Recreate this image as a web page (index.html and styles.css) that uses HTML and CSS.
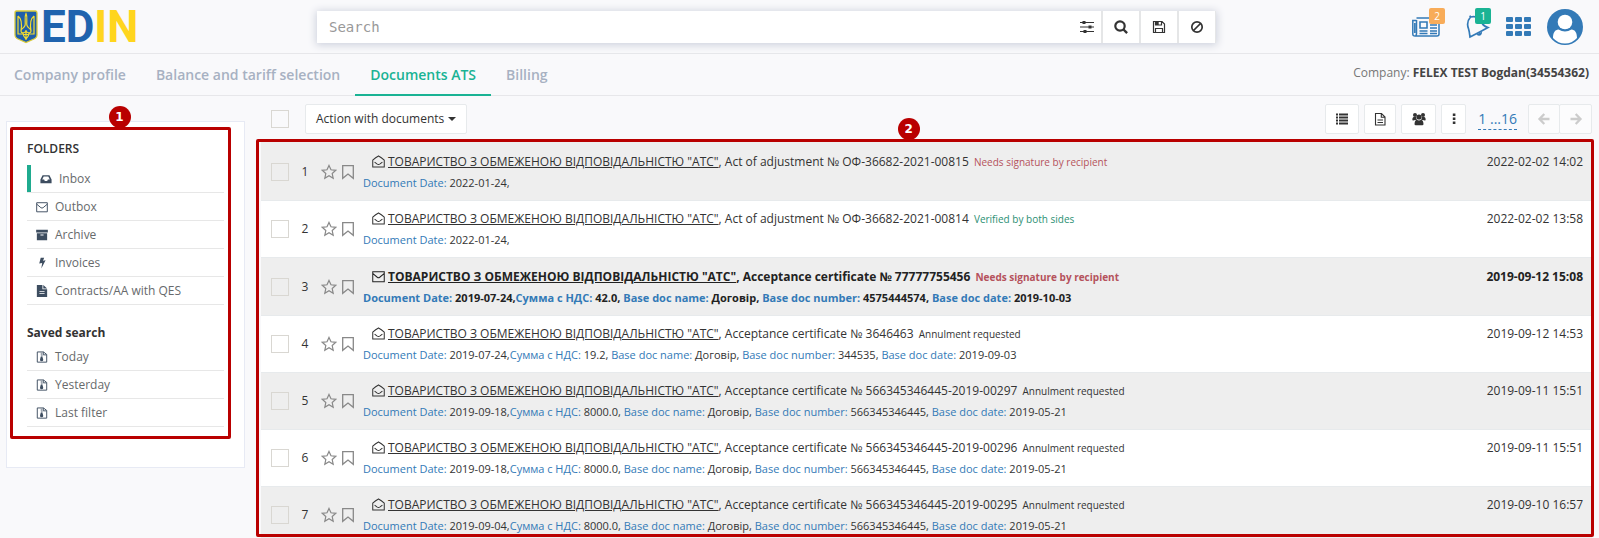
FILE: index.html
```html
<!DOCTYPE html>
<html lang="en">
<head>
<meta charset="utf-8">
<meta name="viewport" content="width=device-width, initial-scale=1">
<title>EDIN – Documents ATS</title>
<link rel="stylesheet" href="styles.css">
</head>
<body>
<svg class="sprite" aria-hidden="true">
  <symbol id="star" viewBox="0 0 16 16"><path d="M8 1.400l2 4.400 4.800.5-3.600 3.200 1 4.800L8 11.800l-4.200 2.500 1-4.800L1.200 6.300 6 5.800z" fill="none" stroke="currentColor" stroke-width="1.200"/></symbol>
  <symbol id="bookmark" viewBox="0 0 14 16"><path d="M1.700 1.700h10.600v12.600L7 10l-5.300 4.300z" fill="none" stroke="currentColor" stroke-width="1.300"/></symbol>
  <symbol id="open" viewBox="0 0 14 14"><path d="M.8 13V5.500Q4 2.500 7 1q3 1.500 6.200 4.500V13zM2.800 7.600L5.700 9.800q1.300.8 2.600 0l2.900-2.200" fill="none" stroke="currentColor" stroke-width="1.100"/></symbol>
  <symbol id="mail" viewBox="0 0 14 14"><path d="M.8 2h12.400v10.600H.8zM1 3.800l4.700 4q1.300.9 2.600 0l4.700-4" fill="none" stroke="currentColor" stroke-width="1.100"/></symbol>
  <symbol id="filter" viewBox="0 0 14 14"><path d="M1.500 1.100h7.200L12.500 4v9h-11zM8.500 1.100V4.500h3.700" fill="none" stroke="currentColor" stroke-width="1.100"/><path d="M5.500 2h1v1h-1zM6.500 3h1v1h-1zM5.500 4h1v1h-1zM6.500 5h1v1h-1zM5.600 6.500h1.800l1 3.500a1.900 1.700 0 1 1-3.700 0z" fill="currentColor"/></symbol>
</svg>

<header class="top">
  <a class="logo" href="#" aria-label="EDIN">
    <svg class="emblem" viewBox="0 0 24 34" aria-hidden="true">
      <path d="M2.500 1h19q1.500 0 1.500 2v22q0 2.500-2 3.500L12 32.500 3 28.500Q1 27.500 1 25V3Q1 1 2.500 1z" fill="#1f5fa9" stroke="#d9cb3a" stroke-width="1.300"/>
      <path d="M4 6v18h5.500M4 6c4 3 4 9 3 15M20 6v18h-5.500M20 6c-4 3-4 9-3 15M12 3.500c-2 4 0 9-1 12-1 3-4 3-4 5.500 0 2 3 3 5 0 2 3 5 2 5 0 0-2.500-3-2.500-4-5.500-1-3 1-8-1-12zM12 20v10M9 23c0 3 1 4 3 6 2-2 3-3 3-6M9.500 24.500h5" fill="none" stroke="#f5dc2e" stroke-width="1.200"/>
    </svg>
    <span>ED</span><span class="logo-in">IN</span>
  </a>
  <form class="search" role="search">
    <input class="search-input" type="search" placeholder="Search" aria-label="Search">
    <button class="search-btn search-tune" type="button" aria-label="Search settings"><svg viewBox="0 0 14 14"><path d="M0 2.500h14M0 7h14M0 11.500h14" stroke="currentColor"/><path d="M2.500 1h3v3h-3zM8.500 5.500h3v3h-3zM3.500 10h3v3h-3z" fill="currentColor"/></svg></button>
    <button class="search-btn" type="submit" aria-label="Find"><svg viewBox="0 0 14 14"><circle cx="6" cy="6" r="4.700" fill="none" stroke="currentColor" stroke-width="2.200"/><path d="M9.500 9.500l3.600 3.600" stroke="currentColor" stroke-width="2.400"/></svg></button>
    <button class="search-btn" type="button" aria-label="Save search"><svg viewBox="0 0 14 14"><path d="M1.500 1.500h8.500l2.500 2.500v8.500h-11zM3.500 12V8.500h7V12M3.500 1.500V5h6V1.500" fill="none" stroke="currentColor" stroke-width="1.200"/><path d="M4 2h2.700v3H4z" fill="currentColor"/></svg></button>
    <button class="search-btn" type="button" aria-label="Clear search"><svg viewBox="0 0 14 14"><circle cx="7" cy="7" r="5.200" fill="none" stroke="currentColor" stroke-width="1.700"/><path d="M3.500 10.500l7-7" stroke="currentColor" stroke-width="1.700"/></svg></button>
  </form>
  <div class="tools">
    <a class="tool" href="#" aria-label="News"><svg class="ic-news" viewBox="0 0 28 20"><path d="M4.500 1h22.500v16q0 2-2 2H3q-2.200 0-2.200-2V3.500h3.700M4.500 3v14q0 1.500-1.200 1.500M2.800 6v10" fill="none" stroke="currentColor" stroke-width="1.500"/><path d="M8 5h7v6H8zM7.500 14h8M7.500 16.500h8M18 5h7M18 8h7M18 11h7M18 14h7M18 16.500h7" fill="none" stroke="currentColor" stroke-width="1.600"/></svg><span class="count count-news">2</span></a>
    <a class="tool" href="#" aria-label="Notifications"><svg class="ic-bell" viewBox="0 0 24 24"><path d="M4.500 2C1 6 1 10 2.600 14c.8 2.500 1 5 1.400 8C9 19.500 14 17 22 12.500c-3-.8-5-2.500-6-4.500C14 3.500 10 .5 4.500 2zM4.500 2L3.800.6" fill="none" stroke="currentColor" stroke-width="1.700"/><path d="M10.500 19.500l5.500-2.800c.6 3.500-3 5.300-5.500 2.800z" fill="currentColor"/></svg><span class="count count-bell">1</span></a>
    <a class="tool" href="#" aria-label="Applications"><svg class="ic-apps" viewBox="0 0 25 19"><g fill="currentColor"><rect width="7" height="5" rx="1"/><rect x="9" width="7" height="5" rx="1"/><rect x="18" width="7" height="5" rx="1"/><rect y="7" width="7" height="5" rx="1"/><rect x="9" y="7" width="7" height="5" rx="1"/><rect x="18" y="7" width="7" height="5" rx="1"/><rect y="14" width="7" height="5" rx="1"/><rect x="9" y="14" width="7" height="5" rx="1"/><rect x="18" y="14" width="7" height="5" rx="1"/></g></svg></a>
    <a class="tool" href="#" aria-label="Account"><svg class="ic-user" viewBox="0 0 36 36"><circle cx="18" cy="18" r="18" fill="currentColor"/><circle cx="18" cy="13" r="7.300" fill="#fff"/><path d="M6 29c0-5 2-8.500 5.500-8.500q6.500 4 13 0C28 20.500 30 24 30 29q-5 5.500-12 5.500T6 29z" fill="#fff"/></svg></a>
  </div>
</header>

<nav class="tabs">
  <a class="tab" href="#">Company profile</a>
  <a class="tab" href="#">Balance and tariff selection</a>
  <a class="tab tab-active" href="#">Documents ATS</a>
  <a class="tab" href="#">Billing</a>
  <p class="company">Company: <strong>FELEX TEST Bogdan(34554362)</strong></p>
</nav>

<main class="main">
  <aside class="side">
    <div class="frame frame-side"><span class="marker">1</span></div>
    <h2 class="side-title side-folders">FOLDERS</h2>
    <ul class="side-list">
      <li><a class="side-link side-link-active" href="#"><svg viewBox="0 0 14 14"><path d="M3 2.500h8l2.500 5v4.500H.5V7.500zM4.300 4L2.600 7.600h2.200l.8 1.600h2.800l.8-1.600h2.200L9.700 4z" fill="currentColor" fill-rule="evenodd"/></svg>Inbox</a></li>
      <li><a class="side-link" href="#"><svg viewBox="0 0 14 14"><use href="#mail"/></svg>Outbox</a></li>
      <li><a class="side-link" href="#"><svg viewBox="0 0 14 14"><path d="M.2 1h13.600v3.200H.2zM1 5h12v8H1zM5.200 6.300v1.200h3.600V6.300z" fill="currentColor" fill-rule="evenodd"/></svg>Archive</a></li>
      <li><a class="side-link" href="#"><svg viewBox="0 0 14 14"><path d="M5.500 1h4L8.200 4.500l3-.6L6.200 13.500 7.200 7l-3.400.7z" fill="currentColor"/></svg>Invoices</a></li>
      <li><a class="side-link" href="#"><svg viewBox="0 0 14 14"><path d="M1 0h6.500v5h5.500v9H1zM8.500 0l4.500 4.200H8.500zM4 7v1h6V7zM4 9.500v1h6v-1z" fill="currentColor" fill-rule="evenodd"/></svg>Contracts/AA with QES</a></li>
    </ul>
    <h2 class="side-title side-saved">Saved search</h2>
    <ul class="side-list">
      <li><a class="side-link" href="#"><svg viewBox="0 0 14 14"><use href="#filter"/></svg>Today</a></li>
      <li><a class="side-link" href="#"><svg viewBox="0 0 14 14"><use href="#filter"/></svg>Yesterday</a></li>
      <li><a class="side-link" href="#"><svg viewBox="0 0 14 14"><use href="#filter"/></svg>Last filter</a></li>
    </ul>
  </aside>

  <section class="content">
    <div class="bar">
      <input class="check" type="checkbox" aria-label="Select all documents">
      <button class="btn btn-action" type="button">Action with documents<span class="caret"></span></button>
      <div class="bar-right">
        <button class="btn btn-34" type="button" aria-label="List view"><svg viewBox="0 0 14 14"><path d="M1 2.500h2M1 5.500h2M1 8.500h2M1 11.500h2M4 2.500h9M4 5.500h9M4 8.500h9M4 11.500h9" stroke="currentColor" stroke-width="1.900"/></svg></button>
        <button class="btn btn-32" type="button" aria-label="Report"><svg viewBox="0 0 14 14"><path d="M2.500 1.500h6l3.500 3.500v8H2.500zM8.300 1.500V5.200H12M4.500 8h5.500M4.500 10.500h5.500" fill="none" stroke="currentColor" stroke-width="1.100"/></svg></button>
        <button class="btn btn-36" type="button" aria-label="Partners"><svg viewBox="0 0 14 14"><g fill="currentColor"><circle cx="3" cy="3" r="2"/><circle cx="11" cy="3" r="2"/><circle cx="7" cy="5" r="2.600"/><path d="M.3 8.200Q.2 5.200 1.500 5h2.600q0 2 1 3H2.500l-.4.600zM13.700 8.200q.1-3-1.200-3.200H9.900q0 2-1 3h2.600l.4.600zM2.500 12.500q0-4 2.300-4.700 2.200 1.500 4.400 0 2.300.7 2.300 4.700l-.9.800H3.400z"/></g></svg></button>
        <button class="btn btn-26" type="button" aria-label="More"><svg viewBox="0 0 14 14"><path d="M5.800 1.500h2.600v2.600H5.800zM5.800 5.500h2.600v2.600H5.800zM5.800 9.500h2.600v2.600H5.800z" fill="currentColor"/></svg></button>
        <a class="pages" href="#">1 ...16</a>
        <div class="pager">
          <button class="btn" type="button" disabled aria-label="Previous page"><svg viewBox="0 0 14 14"><path d="M12.500 7H3M7.300 2L2.500 7l4.800 5" fill="none" stroke="currentColor" stroke-width="2.300"/></svg></button>
          <button class="btn" type="button" disabled aria-label="Next page"><svg viewBox="0 0 14 14"><path d="M1.500 7H11M6.700 2l4.800 5-4.800 5" fill="none" stroke="currentColor" stroke-width="2.300"/></svg></button>
        </div>
      </div>
    </div>

    <div class="list-wrap">
      <div class="frame frame-list"><span class="marker">2</span></div>
      <ol class="list">
        <li class="doc">
          <input class="check" type="checkbox" aria-label="Select document 1"><span class="num">1</span><svg class="star"><use href="#star"/></svg><svg class="mark"><use href="#bookmark"/></svg>
          <div class="info"><p class="title"><svg class="env"><use href="#open"/></svg><a href="#">ТОВАРИСТВО З ОБМЕЖЕНОЮ ВІДПОВІДАЛЬНІСТЮ "АТС"</a>, Act of adjustment № ОФ-36682-2021-00815 <span class="state need">Needs signature by recipient</span></p>
          <p class="meta"><b>Document Date:</b> 2022-01-24,</p></div>
          <time class="when">2022-02-02 14:02</time>
        </li>
        <li class="doc">
          <input class="check" type="checkbox" aria-label="Select document 2"><span class="num">2</span><svg class="star"><use href="#star"/></svg><svg class="mark"><use href="#bookmark"/></svg>
          <div class="info"><p class="title"><svg class="env"><use href="#open"/></svg><a href="#">ТОВАРИСТВО З ОБМЕЖЕНОЮ ВІДПОВІДАЛЬНІСТЮ "АТС"</a>, Act of adjustment № ОФ-36682-2021-00814 <span class="state done">Verified by both sides</span></p>
          <p class="meta"><b>Document Date:</b> 2022-01-24,</p></div>
          <time class="when">2022-02-02 13:58</time>
        </li>
        <li class="doc unread">
          <input class="check" type="checkbox" aria-label="Select document 3"><span class="num">3</span><svg class="star"><use href="#star"/></svg><svg class="mark"><use href="#bookmark"/></svg>
          <div class="info"><p class="title"><svg class="env"><use href="#mail"/></svg><a href="#">ТОВАРИСТВО З ОБМЕЖЕНОЮ ВІДПОВІДАЛЬНІСТЮ "АТС"</a>, Acceptance certificate № 77777755456 <span class="state need">Needs signature by recipient</span></p>
          <p class="meta"><b>Document Date:</b> 2019-07-24,<b>Сумма с НДС:</b> 42.0, <b>Base doc name:</b> Договір, <b>Base doc number:</b> 4575444574, <b>Base doc date:</b> 2019-10-03</p></div>
          <time class="when">2019-09-12 15:08</time>
        </li>
        <li class="doc">
          <input class="check" type="checkbox" aria-label="Select document 4"><span class="num">4</span><svg class="star"><use href="#star"/></svg><svg class="mark"><use href="#bookmark"/></svg>
          <div class="info"><p class="title"><svg class="env"><use href="#open"/></svg><a href="#">ТОВАРИСТВО З ОБМЕЖЕНОЮ ВІДПОВІДАЛЬНІСТЮ "АТС"</a>, Acceptance certificate № 3646463 <span class="state">Annulment requested</span></p>
          <p class="meta"><b>Document Date:</b> 2019-07-24,<b>Сумма с НДС:</b> 19.2, <b>Base doc name:</b> Договір, <b>Base doc number:</b> 344535, <b>Base doc date:</b> 2019-09-03</p></div>
          <time class="when">2019-09-12 14:53</time>
        </li>
        <li class="doc">
          <input class="check" type="checkbox" aria-label="Select document 5"><span class="num">5</span><svg class="star"><use href="#star"/></svg><svg class="mark"><use href="#bookmark"/></svg>
          <div class="info"><p class="title"><svg class="env"><use href="#open"/></svg><a href="#">ТОВАРИСТВО З ОБМЕЖЕНОЮ ВІДПОВІДАЛЬНІСТЮ "АТС"</a>, Acceptance certificate № 566345346445-2019-00297 <span class="state">Annulment requested</span></p>
          <p class="meta"><b>Document Date:</b> 2019-09-18,<b>Сумма с НДС:</b> 8000.0, <b>Base doc name:</b> Договір, <b>Base doc number:</b> 566345346445, <b>Base doc date:</b> 2019-05-21</p></div>
          <time class="when">2019-09-11 15:51</time>
        </li>
        <li class="doc">
          <input class="check" type="checkbox" aria-label="Select document 6"><span class="num">6</span><svg class="star"><use href="#star"/></svg><svg class="mark"><use href="#bookmark"/></svg>
          <div class="info"><p class="title"><svg class="env"><use href="#open"/></svg><a href="#">ТОВАРИСТВО З ОБМЕЖЕНОЮ ВІДПОВІДАЛЬНІСТЮ "АТС"</a>, Acceptance certificate № 566345346445-2019-00296 <span class="state">Annulment requested</span></p>
          <p class="meta"><b>Document Date:</b> 2019-09-18,<b>Сумма с НДС:</b> 8000.0, <b>Base doc name:</b> Договір, <b>Base doc number:</b> 566345346445, <b>Base doc date:</b> 2019-05-21</p></div>
          <time class="when">2019-09-11 15:51</time>
        </li>
        <li class="doc">
          <input class="check" type="checkbox" aria-label="Select document 7"><span class="num">7</span><svg class="star"><use href="#star"/></svg><svg class="mark"><use href="#bookmark"/></svg>
          <div class="info"><p class="title"><svg class="env"><use href="#open"/></svg><a href="#">ТОВАРИСТВО З ОБМЕЖЕНОЮ ВІДПОВІДАЛЬНІСТЮ "АТС"</a>, Acceptance certificate № 566345346445-2019-00295 <span class="state">Annulment requested</span></p>
          <p class="meta"><b>Document Date:</b> 2019-09-04,<b>Сумма с НДС:</b> 8000.0, <b>Base doc name:</b> Договір, <b>Base doc number:</b> 566345346445, <b>Base doc date:</b> 2019-05-21</p></div>
          <time class="when">2019-09-10 16:57</time>
        </li>
      </ol>
    </div>
  </section>
</main>
</body>
</html>
```

FILE: styles.css
```css
* { box-sizing: border-box; }

body {
  margin: 0;
  height: 100vh;
  display: flex;
  flex-direction: column;
  overflow: hidden;
  background: #f9f9fb;
  color: #333;
  font: 12px/20px "Open Sans", sans-serif;
}

a { color: inherit; text-decoration: none; }
p, h2, ul, ol { margin: 0; padding: 0; }
ul, ol { list-style: none; }
button, input { font: inherit; color: inherit; margin: 0; }
svg { display: block; flex: none; }
.sprite { position: absolute; width: 0; height: 0; }

/* Header */
.top {
  flex: none;
  display: grid;
  grid-template-columns: 303px 1fr 367px;
  align-items: center;
  height: 54px;
  padding: 0 16px 0 14px;
  border-bottom: 1px solid #e7e7ea;
}
.logo {
  display: flex;
  align-items: center;
  color: #1f63ae;
  font: 700 44px/40px Roboto, sans-serif;
}
.emblem { width: 24px; height: 34px; margin-right: 3px; }
.logo-in { color: #ffd51e; }

.search {
  display: flex;
  height: 32px;
  padding-right: 1px;
  background: #e5e6e7;
  gap: 2px;
  box-shadow: 0 1px 8px 1px #ccd0dc;
}
.search-input {
  flex: 1;
  min-width: 0;
  padding: 0 12px;
  border: 0;
  outline: 0;
  background: #fff;
  font: 14px/20px "DejaVu Sans Mono", monospace;
}
.search-input::placeholder { color: #999; opacity: 1; }
.search-btn {
  width: 36px;
  padding: 0;
  border: 0;
  background: #fff;
  display: grid;
  place-items: center;
}
.search-btn svg, .btn svg { width: 14px; height: 14px; }
.search-tune { width: 28px; margin-left: -2px; }

.tools { display: flex; justify-content: flex-end; align-items: center; gap: 16px; color: #337ab7; }
.tool { position: relative; }
.tool + .tool:nth-child(2) { margin-left: 10px; }
.ic-news { width: 28px; height: 20px; }
.ic-bell { width: 24px; height: 24px; }
.ic-apps { width: 25px; height: 19px; }
.ic-user { width: 36px; height: 36px; }
.count {
  position: absolute;
  left: 17px;
  top: -9px;
  width: 16px;
  height: 16px;
  border-radius: 2px;
  color: #fff;
  font-size: 10px;
  line-height: 16px;
  text-align: center;
}
.count-news { background: #f8ac59; }
.count-bell { left: 9px; top: -7px; background: #1ab394; }

/* Navigation */
.tabs {
  flex: none;
  display: flex;
  height: 42px;
  border-bottom: 1px solid #e7e7ea;
  color: #a7b1c2;
  font-size: 14px;
  font-weight: 600;
}
.tab { padding: 11px 15px 0; }
.tab:first-child { padding-left: 14px; }
.tab-active { color: #1ab394; box-shadow: inset 0 -2px #1ab394; margin-bottom: -1px; }
.company { margin-left: auto; padding: 9px 10px 0 0; color: #777; font-size: 12px; font-weight: 400; }
.company strong { color: #444; }

.main { flex: 1; min-height: 0; display: flex; align-items: flex-start; }

/* Folder panel */
.side {
  position: relative;
  flex: none;
  width: 239px;
  margin: 25px 0 0 6px;
  padding: 17px 20px 40px;
  border: 1px solid #e7eaf4;
  background: #fff;
}
.side-title { font-size: 12px; line-height: 20px; font-weight: 600; }
.side-folders { margin-bottom: 6px; }
.side-saved { margin-top: 18px; font-weight: 700; }
.side-list li { height: 28px; border-bottom: 1px solid #e7e7e7; }
.side-link {
  display: flex;
  align-items: center;
  gap: 7px;
  height: 27px;
  padding-left: 9px;
  color: #676a6c;
}
.side-link svg { width: 12px; height: 12px; color: #3d4d60; }
.side-link-active { border-left: 4px solid #1fab8f; }

/* Numbered highlight frames */
.frame {
  position: absolute;
  z-index: 1;
  border: 3px solid #b90000;
  border-radius: 2px;
  pointer-events: none;
}
.frame-side { inset: 5px 13px 28px 3px; }
.frame-list { inset: 0 -2px 1px 0; }
.marker {
  position: absolute;
  left: calc(50% - 12px);
  top: -24px;
  width: 22px;
  height: 22px;
  border-radius: 50%;
  background: #b90000;
  color: #fff;
  font: 700 12px/22px "DejaVu Sans", sans-serif;
  text-align: center;
}
.frame-list .marker { left: calc(49% - 14px); }

/* Toolbar */
.content { flex: 1; min-width: 0; align-self: stretch; display: flex; flex-direction: column; padding: 8px 7px 0 11px; }
.bar { display: flex; align-items: center; padding-left: 15px; margin-bottom: 5px; }
.bar-right { margin-left: auto; display: flex; align-items: center; gap: 5px; }
.btn {
  height: 30px;
  padding: 0;
  border: 1px solid #e7eaec;
  border-radius: 2px;
  background: #fff;
  display: flex;
  align-items: center;
  justify-content: center;
}
.btn-action { margin-left: 16px; padding: 0 10px; }
.caret { margin-left: 4px; border: 4px solid transparent; border-top-color: #333; border-bottom: 0; }
.btn-34 { width: 34px; }
.btn-32 { width: 32px; }
.btn-36 { width: 35px; }
.btn-26 { width: 25px; }
.pages { margin: 0 6px 0 7px; color: #337ab7; font-size: 14px; line-height: 20px; border-bottom: 1px dashed #337ab7; }
.pager { display: flex; }
.pager .btn { width: 32px; color: #ccc; background: #fcfcfd; }
.pager .btn + .btn { margin-left: -1px; width: 33px; }

.check {
  appearance: none;
  flex: none;
  width: 18px;
  height: 18px;
  border: 1px solid #d9d7d2;
}

/* Documents */
.list-wrap { position: relative; flex: 1; min-height: 0; }
.list { height: 100%; padding: 2px 0 0 5px; overflow: hidden; }
.doc {
  display: flex;
  align-items: center;
  min-height: 57px;
  padding: 0 9px 0 10px;
  border-bottom: 1px solid #e7eaec;
  background: #fff;
}
.doc:nth-child(odd) { background: #eee; }
.doc:first-child { padding-top: 3px; min-height: 60px; }
.num { width: 32px; text-align: center; }
.star { width: 16px; height: 16px; color: #888; margin-right: 4px; }
.mark { width: 14px; height: 16px; color: #888; margin-right: 8px; }
.info { flex: 1; min-width: 0; align-self: flex-start; padding-top: 8px; white-space: nowrap; }
.title { line-height: 20px; padding-left: 9px; }
.title a { text-decoration: underline; }
.env { display: inline-block; width: 13px; height: 13px; margin-right: 3px; vertical-align: -2px; }
.state { font-size: 10px; margin-left: 2px; }
.need { color: #b5525c; }
.done { color: #2b8f73; }
.meta { font-size: 11px; line-height: 22px; }
.meta b { color: #337ab7; font-weight: inherit; }
.when { align-self: flex-start; padding-top: 8px; line-height: 20px; }
.unread { min-height: 58px; }
.unread .info, .unread .when { padding-top: 9px; font-weight: 700; color: #222; }
```
